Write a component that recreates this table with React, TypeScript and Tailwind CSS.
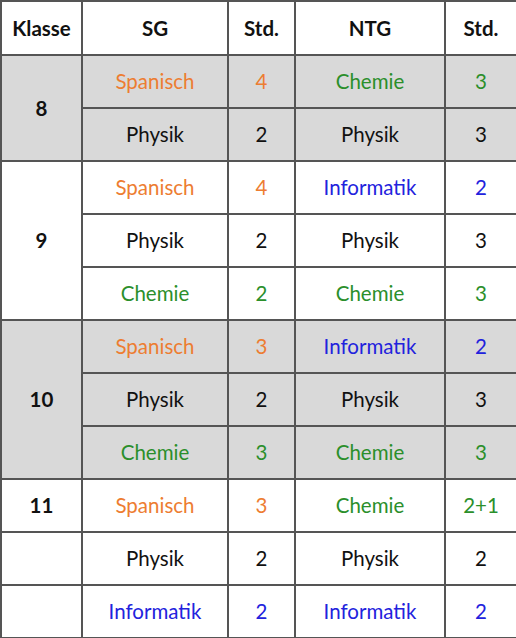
import React from "react";

type Cell = { text: string; color: string };

const O = "text-[#ed7d31]";
const G = "text-[#2b8f2b]";
const B = "text-[#2222dd]";
const K = "text-[#111111]";

interface Row {
  klasse?: { label: string; span: number };
  sg: Cell;
  sgStd: Cell;
  ntg: Cell;
  ntgStd: Cell;
  grey?: boolean;
}

const rows: Row[] = [
  { klasse: { label: "8", span: 2 }, sg: { text: "Spanisch", color: O }, sgStd: { text: "4", color: O }, ntg: { text: "Chemie", color: G }, ntgStd: { text: "3", color: G }, grey: true },
  { sg: { text: "Physik", color: K }, sgStd: { text: "2", color: K }, ntg: { text: "Physik", color: K }, ntgStd: { text: "3", color: K }, grey: true },
  { klasse: { label: "9", span: 3 }, sg: { text: "Spanisch", color: O }, sgStd: { text: "4", color: O }, ntg: { text: "Informatik", color: B }, ntgStd: { text: "2", color: B } },
  { sg: { text: "Physik", color: K }, sgStd: { text: "2", color: K }, ntg: { text: "Physik", color: K }, ntgStd: { text: "3", color: K } },
  { sg: { text: "Chemie", color: G }, sgStd: { text: "2", color: G }, ntg: { text: "Chemie", color: G }, ntgStd: { text: "3", color: G } },
  { klasse: { label: "10", span: 3 }, sg: { text: "Spanisch", color: O }, sgStd: { text: "3", color: O }, ntg: { text: "Informatik", color: B }, ntgStd: { text: "2", color: B }, grey: true },
  { sg: { text: "Physik", color: K }, sgStd: { text: "2", color: K }, ntg: { text: "Physik", color: K }, ntgStd: { text: "3", color: K }, grey: true },
  { sg: { text: "Chemie", color: G }, sgStd: { text: "3", color: G }, ntg: { text: "Chemie", color: G }, ntgStd: { text: "3", color: G }, grey: true },
  { klasse: { label: "11", span: 1 }, sg: { text: "Spanisch", color: O }, sgStd: { text: "3", color: O }, ntg: { text: "Chemie", color: G }, ntgStd: { text: "2+1", color: G } },
  { klasse: { label: "", span: 1 }, sg: { text: "Physik", color: K }, sgStd: { text: "2", color: K }, ntg: { text: "Physik", color: K }, ntgStd: { text: "2", color: K } },
  { klasse: { label: "", span: 1 }, sg: { text: "Informatik", color: B }, sgStd: { text: "2", color: B }, ntg: { text: "Informatik", color: B }, ntgStd: { text: "2", color: B } },
];

const cellBase = "border-2 border-[#555555] text-center align-middle p-0";

const App: React.FC = () => {
  return (
    <div className="w-[516px] h-[638px] bg-white overflow-hidden" style={{ fontFamily: "Lato, 'Open Sans', sans-serif" }}>
      <table className="w-[516px] table-fixed border-collapse text-[20.5px] leading-none">
        <colgroup>
          <col className="w-[81px]" />
          <col className="w-[146px]" />
          <col className="w-[67px]" />
          <col className="w-[150px]" />
          <col className="w-[72px]" />
        </colgroup>
        <thead>
          <tr className="h-[54px] bg-white">
            {["Klasse", "SG", "Std.", "NTG", "Std."].map((h, i) => (
              <th key={i} className={`${cellBase} font-bold text-[#111111]`}>
                {h}
              </th>
            ))}
          </tr>
        </thead>
        <tbody>
          {rows.map((r, i) => (
            <tr key={i} className={`h-[53px] ${r.grey ? "bg-[#d9d9d9]" : "bg-white"}`}>
              {r.klasse && (
                <td rowSpan={r.klasse.span} className={`${cellBase} font-bold text-[#111111]`}>
                  {r.klasse.label}
                </td>
              )}
              <td className={`${cellBase} ${r.sg.color}`}>{r.sg.text}</td>
              <td className={`${cellBase} ${r.sgStd.color}`}>{r.sgStd.text}</td>
              <td className={`${cellBase} ${r.ntg.color}`}>{r.ntg.text}</td>
              <td className={`${cellBase} ${r.ntgStd.color}`}>{r.ntgStd.text}</td>
            </tr>
          ))}
        </tbody>
      </table>
    </div>
  );
};

export default App;
